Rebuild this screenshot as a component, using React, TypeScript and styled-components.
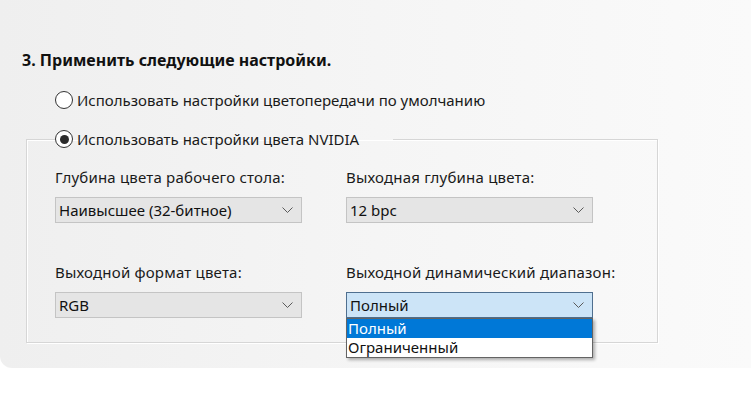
import React from "react";
import styled, { createGlobalStyle } from "styled-components";

const Global = createGlobalStyle`
  html, body { margin: 0; padding: 0; background: #ffffff; }
  body { font-family: "Noto Sans", "DejaVu Sans", sans-serif; color: #1a1a1a; }
`;

const Panel = styled.div`
  width: 751px;
  height: 368px;
  box-sizing: border-box;
  padding: 50px 0 0 22px;
  background: linear-gradient(90deg, #efefef 0%, #f5f5f5 50%, #fafafa 100%);
  border-bottom-left-radius: 12px;
`;

const Heading = styled.div`
  font-size: 16px;
  font-weight: 700;
  line-height: 20px;
  height: 20px;
  color: #111;
`;

const RadioRow = styled.label`
  display: flex;
  align-items: center;
  gap: 4px;
  height: 20px;
  font-size: 15px;
  line-height: 20px;
  color: #1a1a1a;
  white-space: nowrap;
`;

const TopRadio = styled(RadioRow)`
  margin: 20px 0 0 33px;
`;

const Circle = styled.span<{ $checked?: boolean }>`
  width: 18px;
  height: 18px;
  box-sizing: border-box;
  border: 1px solid #333;
  border-radius: 50%;
  background: #fff;
  display: inline-flex;
  align-items: center;
  justify-content: center;
  flex: none;
  &::after {
    content: "";
    width: 9px;
    height: 9px;
    border-radius: 50%;
    background: ${(p) => (p.$checked ? "#2b2b2b" : "transparent")};
  }
`;

const Group = styled.fieldset`
  margin: 19px 0 0 4px;
  width: 632px;
  height: 214px;
  box-sizing: border-box;
  padding: 18px 0 0 28px;
  border: 1px solid #d6d6d6;
  box-shadow: inset 1px 1px 0 #ffffff, 1px 1px 0 #ffffff;
  position: relative;
`;

const Legend = styled.legend`
  padding: 0 34px 0 0;
  margin: 0;
  height: 20px;
`;

const Grid = styled.div`
  display: grid;
  grid-template-columns: 247px 247px;
  column-gap: 44px;
  row-gap: 39px;
`;

const Field = styled.div`
  display: flex;
  flex-direction: column;
  position: relative;
`;

const Label = styled.div`
  font-size: 15px;
  line-height: 20px;
  height: 20px;
  color: #1a1a1a;
  margin-bottom: 10px;
  white-space: nowrap;
  letter-spacing: 0.2px;
`;

const Select = styled.div<{ $active?: boolean }>`
  height: 26px;
  box-sizing: border-box;
  border: 1px solid ${(p) => (p.$active ? "#4f6f8f" : "#c4c4c4")};
  background: ${(p) => (p.$active ? "#cce4f7" : "#e5e5e5")};
  display: flex;
  align-items: center;
  justify-content: space-between;
  padding: 0 8px 0 3px;
  font-size: 15px;
  color: #111;
`;

const Chevron = () => (
  <svg width="11" height="7" viewBox="0 0 11 7">
    <polyline points="0.5,0.5 5.5,5.5 10.5,0.5" fill="none" stroke="#5a5a5a" strokeWidth="1" />
  </svg>
);

const List = styled.ul`
  position: absolute;
  left: 0;
  top: 56px;
  width: 247px;
  box-sizing: border-box;
  margin: 0;
  padding: 0;
  list-style: none;
  background: #fff;
  border: 1px solid #646464;
  box-shadow: 2px 2px 3px rgba(0, 0, 0, 0.3);
  z-index: 2;
`;

const Item = styled.li<{ $selected?: boolean }>`
  height: 19px;
  line-height: 19px;
  padding-left: 1px;
  font-size: 15px;
  background: ${(p) => (p.$selected ? "#0078d7" : "#fff")};
  color: ${(p) => (p.$selected ? "#ffffff" : "#111")};
`;

export default function App() {
  return (
    <>
      <Global />
      <Panel>
        <Heading>3. Применить следующие настройки.</Heading>
        <TopRadio>
          <Circle />
          Использовать настройки цветопередачи по умолчанию
        </TopRadio>
        <Group>
          <Legend>
            <RadioRow>
              <Circle $checked />
              Использовать настройки цвета NVIDIA
            </RadioRow>
          </Legend>
          <Grid>
            <Field>
              <Label>Глубина цвета рабочего стола:</Label>
              <Select>
                Наивысшее (32-битное)
                <Chevron />
              </Select>
            </Field>
            <Field>
              <Label>Выходная глубина цвета:</Label>
              <Select>
                12 bpc
                <Chevron />
              </Select>
            </Field>
            <Field>
              <Label>Выходной формат цвета:</Label>
              <Select>
                RGB
                <Chevron />
              </Select>
            </Field>
            <Field>
              <Label>Выходной динамический диапазон:</Label>
              <Select $active>
                Полный
                <Chevron />
              </Select>
              <List>
                <Item $selected>Полный</Item>
                <Item>Ограниченный</Item>
              </List>
            </Field>
          </Grid>
        </Group>
      </Panel>
    </>
  );
}
